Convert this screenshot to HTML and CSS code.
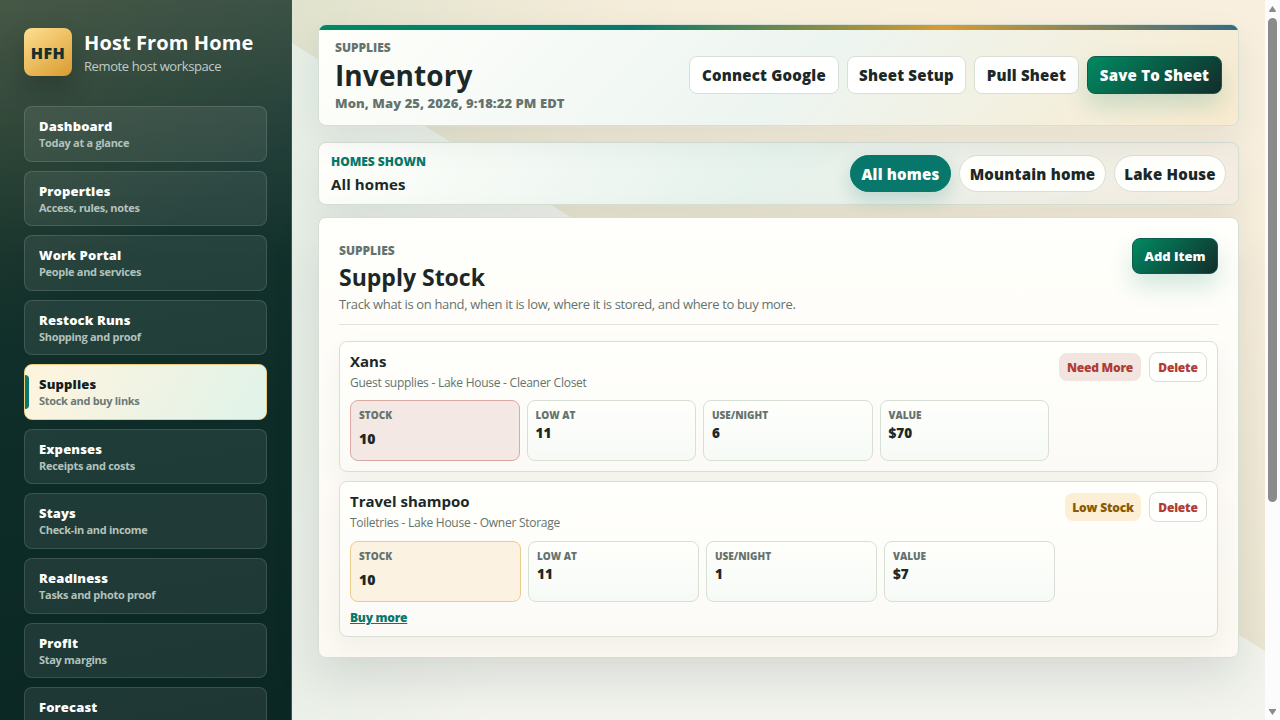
FILE: index.html
```html
<!DOCTYPE html>
<html lang="en">
  <head>
    <meta charset="UTF-8" />
    <meta name="viewport" content="width=device-width, initial-scale=1.0" />
    <title>Host From Home - Inventory</title>
    <link rel="stylesheet" href="styles.css" />
  </head>
  <body>
    <div class="app">
      <aside class="sidebar">
        <div class="brand">
          <div class="brand-mark">HFH</div>
          <div>
            <h2>Host From Home</h2>
            <p>Remote host workspace</p>
          </div>
        </div>
        <nav class="nav">
          <button class="nav-item"><strong>Dashboard</strong><small>Today at a glance</small></button>
          <button class="nav-item"><strong>Properties</strong><small>Access, rules, notes</small></button>
          <button class="nav-item"><strong>Work Portal</strong><small>People and services</small></button>
          <button class="nav-item"><strong>Restock Runs</strong><small>Shopping and proof</small></button>
          <button class="nav-item active"><strong>Supplies</strong><small>Stock and buy links</small></button>
          <button class="nav-item"><strong>Expenses</strong><small>Receipts and costs</small></button>
          <button class="nav-item"><strong>Stays</strong><small>Check-in and income</small></button>
          <button class="nav-item"><strong>Readiness</strong><small>Tasks and photo proof</small></button>
          <button class="nav-item"><strong>Profit</strong><small>Stay margins</small></button>
          <button class="nav-item"><strong>Forecast</strong></button>
        </nav>
      </aside>
      <main class="main">
        <header class="topbar">
          <div class="title">
            <p class="eyebrow">Supplies</p>
            <h1>Inventory</h1>
            <p class="clock">Mon, May 25, 2026, 9:18:22 PM EDT</p>
          </div>
          <div class="actions">
            <button class="btn connect">Connect Google</button>
            <button class="btn setup">Sheet Setup</button>
            <button class="btn pull">Pull Sheet</button>
            <button class="btn primary save">Save To Sheet</button>
          </div>
        </header>
        <section class="homes">
          <div class="title">
            <p class="eyebrow teal">Homes shown</p>
            <p class="homes-value">All homes</p>
          </div>
          <div class="pills">
            <button class="pill selected all">All homes</button>
            <button class="pill mountain">Mountain home</button>
            <button class="pill lake">Lake House</button>
          </div>
        </section>
        <section class="panel">
          <div class="panel-head">
            <div>
              <p class="eyebrow">Supplies</p>
              <h2>Supply Stock</h2>
              <p class="lead">Track what is on hand, when it is low, where it is stored, and where to buy more.</p>
            </div>
            <button class="btn primary add">Add Item</button>
          </div>
          <div class="items">
            <article class="item">
              <div class="item-main">
                <h3>Xans</h3>
                <p class="meta">Guest supplies - Lake House - Cleaner Closet</p>
                <div class="stats">
                  <div class="stat danger"><span>Stock</span><b>10</b></div>
                  <div class="stat"><span>Low at</span><b>11</b></div>
                  <div class="stat"><span>Use/night</span><b>6</b></div>
                  <div class="stat"><span>Value</span><b>$70</b></div>
                </div>
              </div>
              <div class="item-side">
                <span class="tag need">Need More</span>
                <button class="delete">Delete</button>
              </div>
            </article>
            <article class="item">
              <div class="item-main">
                <h3>Travel shampoo</h3>
                <p class="meta">Toiletries - Lake House - Owner Storage</p>
                <div class="stats">
                  <div class="stat warn"><span>Stock</span><b>10</b></div>
                  <div class="stat"><span>Low at</span><b>11</b></div>
                  <div class="stat"><span>Use/night</span><b>1</b></div>
                  <div class="stat"><span>Value</span><b>$7</b></div>
                </div>
                <a class="buy" href="#">Buy more</a>
              </div>
              <div class="item-side">
                <span class="tag low">Low Stock</span>
                <button class="delete">Delete</button>
              </div>
            </article>
          </div>
        </section>
      </main>
      <div class="scrollbar">
        <svg width="15" height="17" viewBox="0 0 15 17"><path d="M4.5 12 L4 11 L7.5 6 L11 11 L10.5 12 Z" fill="#8b8b8b" /></svg>
        <div class="thumb"></div>
        <svg width="15" height="17" viewBox="0 0 15 17"><path d="M4 6 L11 6 L11 7 L7.5 12 L4 7 Z" fill="#8b8b8b" /></svg>
      </div>
    </div>
  </body>
</html>
```

FILE: styles.css
```css
* {
  box-sizing: border-box;
  margin: 0;
  padding: 0;
}
:root {
  --ink: #1b2827;
  --muted: #65736f;
  --teal: #08786c;
  --line: #d8dfd5;
}
body {
  height: 720px;
  overflow: hidden;
  font-family: "Open Sans", "Noto Sans", sans-serif;
  font-variant-ligatures: none;
  color: var(--ink);
  background: #f1f4ed;
}
button {
  font: inherit;
  color: inherit;
  border: 0;
  cursor: pointer;
}
.app {
  display: grid;
  grid-template-columns: 292px 973px 15px;
  height: 720px;
  overflow: hidden;
}

/* Sidebar */
.sidebar {
  padding: 28px 24px 0;
  border-right: 1px solid #40544c;
  overflow: hidden;
  background:
    linear-gradient(145deg, rgba(217, 160, 50, 0.1), rgba(217, 160, 50, 0) 38%),
    linear-gradient(180deg, rgba(255, 255, 255, 0.11), rgba(255, 255, 255, 0) 260px),
    linear-gradient(170deg, #1d3a31, #0d2c28 60%, #0b2723);
}
.brand {
  display: flex;
  align-items: center;
  gap: 12px;
  height: 48px;
  margin-bottom: 30px;
}
.brand-mark {
  display: grid;
  place-items: center;
  width: 48px;
  height: 48px;
  padding-top: 2px;
  border-radius: 8px;
  background: linear-gradient(145deg, #ffdf91, #d99b2e);
  box-shadow: 0 12px 24px rgba(0, 0, 0, 0.2);
  color: #12302d;
  font-size: 16px;
  font-weight: 800;
  letter-spacing: 0.4px;
}
.brand h2 {
  color: #fff;
  font-size: 20px;
  line-height: 26px;
  font-weight: 700;
  letter-spacing: 0.1px;
  margin-top: 2px;
  white-space: nowrap;
}
.brand p {
  color: #c0cdc7;
  font-size: 13px;
  line-height: 20px;
  letter-spacing: -0.4px;
}
.nav {
  display: grid;
  gap: 9px;
}
.nav-item {
  position: relative;
  display: flex;
  flex-direction: column;
  height: 55.57px;
  padding: 10px 14px;
  border: 1px solid rgba(255, 255, 255, 0.13);
  border-radius: 8px;
  background: rgba(255, 255, 255, 0.08);
  color: #fff;
  text-align: left;
}
.nav-item strong {
  font-size: 13px;
  line-height: 18px;
  font-weight: 800;
  letter-spacing: 0.15px;
}
.nav-item small {
  color: #b3c2bc;
  font-size: 11px;
  line-height: 16.4px;
  font-weight: 700;
  letter-spacing: -0.3px;
}
.nav-item.active {
  border-color: #f1cd80;
  background: linear-gradient(120deg, #fff4dd, #e0f3ea);
  color: #12201f;
}
.nav-item.active small {
  color: #6b7975;
}
.nav-item.active::before {
  content: "";
  position: absolute;
  left: 0;
  top: 10px;
  bottom: 10px;
  width: 4px;
  border-radius: 0 4px 4px 0;
  background: var(--teal);
}

/* Main column */
.main {
  padding: 24px 26px 0;
  background:
    linear-gradient(100deg, rgba(0, 135, 90, 0.06), rgba(0, 135, 90, 0) 30%),
    linear-gradient(212deg, #f8efde 0%, #f7eedc 25%, #ece7d3 49%, rgba(255, 255, 255, 0) 49.05%),
    #f3f4ee;
}
.eyebrow {
  color: var(--muted);
  font-size: 12px;
  line-height: 16px;
  font-weight: 800;
  letter-spacing: -0.02px;
  text-transform: uppercase;
}
.teal {
  color: var(--teal);
}
.topbar,
.homes,
.panel {
  border: 1px solid #d5dfd3;
  border-radius: 8px;
}
.topbar {
  position: relative;
  display: flex;
  align-items: center;
  justify-content: space-between;
  height: 102px;
  padding: 0 16px;
  overflow: hidden;
  background: linear-gradient(135deg, #fffffb, #edf5f1 52%, #f9ebcf);
  box-shadow: 0 14px 34px rgba(30, 50, 45, 0.08);
}
.topbar::before {
  content: "";
  position: absolute;
  left: 0;
  right: 0;
  top: 0;
  height: 5px;
  background: linear-gradient(90deg, #008a61, #08786c 34%, #d99b2e 68%, #356b83);
}
.title {
  padding-top: 2px;
}
h1 {
  font-size: 28px;
  line-height: 38px;
  font-weight: 700;
  letter-spacing: 0.1px;
}
.clock {
  color: var(--muted);
  font-size: 13px;
  line-height: 18px;
  font-weight: 800;
  letter-spacing: 0.08px;
}
.actions,
.pills {
  display: flex;
  gap: 8px;
}
.btn {
  height: 38px;
  border: 1px solid var(--line);
  border-radius: 8px;
  background: #fff;
  font-size: 15px;
  font-weight: 800;
  letter-spacing: 0.2px;
  white-space: nowrap;
}
.connect {
  width: 150px;
}
.setup {
  width: 119px;
}
.pull {
  width: 105px;
}
.save {
  width: 135px;
}
.primary {
  border-color: #0c5c4b;
  background: linear-gradient(135deg, #008a61, #122d2b);
  color: #fff;
  box-shadow: 0 12px 24px rgba(0, 120, 95, 0.18);
}
.homes {
  display: flex;
  align-items: center;
  justify-content: space-between;
  height: 63px;
  margin-top: 16px;
  padding: 0 12px;
  background: linear-gradient(125deg, #fffffb, #e6f2ec 48%, #f5ece0);
  box-shadow: 0 14px 34px rgba(30, 50, 45, 0.08);
}
.homes-value {
  font-size: 15px;
  line-height: 22px;
  font-weight: 700;
  letter-spacing: 0.1px;
  margin-top: 3px;
}
.pill {
  height: 37px;
  border: 1px solid var(--line);
  border-radius: 19px;
  background: #fffffb;
  font-size: 15px;
  font-weight: 800;
  letter-spacing: 0.2px;
  white-space: nowrap;
}
.all {
  width: 101px;
}
.mountain {
  width: 147px;
}
.lake {
  width: 112px;
}
.selected {
  border-color: var(--teal);
  background: var(--teal);
  color: #fff;
  box-shadow: 0 8px 18px rgba(8, 120, 108, 0.2);
}

/* Stock panel */
.panel {
  height: 441px;
  margin-top: 12px;
  padding: 19px 20px 20px;
  background: linear-gradient(180deg, #fffffb, #fcf8f2);
  box-shadow: 0 20px 48px rgba(30, 50, 45, 0.13);
}
.panel-head {
  display: flex;
  align-items: flex-start;
  justify-content: space-between;
  height: 88px;
  padding-top: 1px;
  border-bottom: 1px solid #dfe2dc;
}
.panel-head .eyebrow {
  margin-top: 5px;
}
.panel h2 {
  font-size: 23px;
  line-height: 36px;
  font-weight: 700;
}
.lead {
  color: var(--muted);
  font-size: 13px;
  line-height: 18px;
  letter-spacing: -0.35px;
}
.add {
  width: 86px;
  height: 36px;
  font-size: 13px;
  letter-spacing: 0;
}
.items {
  display: grid;
  gap: 9px;
  margin-top: 16px;
}
.item {
  display: flex;
  justify-content: space-between;
  gap: 10px;
  padding: 10px;
  border: 1px solid var(--line);
  border-radius: 8px;
  background: linear-gradient(180deg, #fffffb, #fbfaf6);
  box-shadow: 0 10px 24px rgba(30, 50, 45, 0.05);
}
.item-main {
  flex: 1;
}
h3 {
  font-size: 15px;
  line-height: 18px;
  font-weight: 700;
}
.meta {
  color: var(--muted);
  font-size: 12px;
  line-height: 16.4px;
  letter-spacing: -0.26px;
  margin: 5px 0 9px;
}
.stats {
  display: grid;
  grid-template-columns: repeat(4, 1fr);
  gap: 7px;
}
.stat {
  height: 61px;
  padding: 7px 8px;
  border: 1px solid var(--line);
  border-radius: 8px;
  background: linear-gradient(180deg, #fffffc, #f6faf6);
}
.stat span {
  display: block;
  color: var(--muted);
  font-size: 10px;
  line-height: 15px;
  font-weight: 800;
  text-transform: uppercase;
}
.stat b {
  display: block;
  font-size: 13.5px;
  line-height: 20px;
  font-weight: 800;
}
.stat.danger {
  border-color: #dba9a1;
  background: #f4e8e4;
}
.stat.warn {
  border-color: #eacb90;
  background: #fcf2e1;
}
.danger b,
.warn b {
  font-size: 14px;
  line-height: 32px;
}
.item-side {
  display: flex;
  align-items: center;
  gap: 8px;
  height: 30px;
}
.tag {
  height: 28px;
  border-radius: 8px;
  font-size: 12px;
  line-height: 29px;
  font-weight: 800;
  letter-spacing: -0.2px;
  text-align: center;
  white-space: nowrap;
}
.need {
  width: 82px;
  background: #f2e4df;
  color: #af3c35;
}
.low {
  width: 76px;
  background: #fdefd5;
  color: #8a5a05;
}
.delete {
  width: 58px;
  height: 30px;
  border: 1px solid var(--line);
  border-radius: 8px;
  background: #fffffd;
  color: #af3c35;
  font-size: 12px;
  font-weight: 800;
  letter-spacing: -0.2px;
}
.buy {
  display: block;
  width: fit-content;
  margin-top: 8px;
  color: var(--teal);
  font-size: 12px;
  line-height: 16px;
  font-weight: 800;
  letter-spacing: -0.25px;
}

/* Scroll track */
.scrollbar {
  display: flex;
  flex-direction: column;
  align-items: center;
  background: #fcfcfc;
}
.thumb {
  width: 9px;
  height: 484px;
  margin: 1px 0 201px;
  border-radius: 5px;
  background: #8b8b8b;
}
```
